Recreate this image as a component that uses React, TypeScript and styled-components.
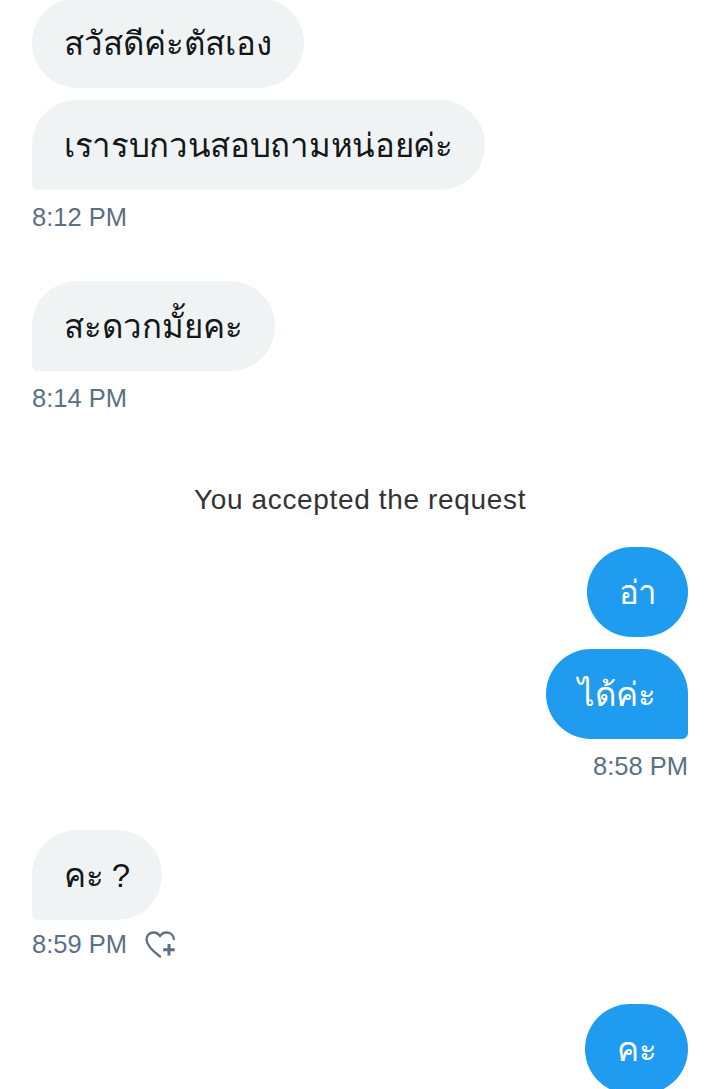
import React from 'react'
import styled, { createGlobalStyle } from 'styled-components'

const GlobalStyle = createGlobalStyle`
  html, body {
    margin: 0;
    padding: 0;
    background: #fff;
    overflow: hidden;
  }
`

const Page = styled.div`
  width: 720px;
  height: 1089px;
  overflow: hidden;
  box-sizing: border-box;
  padding: 0 32px;
  font-family: "Liberation Sans", Arial, sans-serif;
`

// pulls the first bubble up so it is cut off by the top of the screen
const Thread = styled.div`
  display: flex;
  flex-direction: column;
  flex-shrink: 0;
  transform: translateY(-2px);
`

const Row = styled.div<{ $mine?: boolean; $gap?: number }>`
  display: flex;
  flex-shrink: 0;
  justify-content: ${p => (p.$mine ? 'flex-end' : 'flex-start')};
  margin-top: ${p => p.$gap ?? 0}px;
`

const Bubble = styled.div<{ $mine?: boolean; $tail?: boolean; $spacing?: number }>`
  height: 90px;
  box-sizing: border-box;
  padding: 0 32px;
  display: flex;
  align-items: center;
  font-size: 33px;
  white-space: nowrap;
  letter-spacing: ${p => p.$spacing ?? 0}px;
  font-family: "Liberation Sans", "Noto Sans", sans-serif;
  border-radius: 45px;
  background: ${p => (p.$mine ? '#1f9bf0' : '#eff3f4')};
  color: ${p => (p.$mine ? '#fff' : '#14171a')};
  ${p => p.$tail && (p.$mine ? 'border-bottom-right-radius: 6px;' : 'border-bottom-left-radius: 6px;')}
`

const Meta = styled.div<{ $mine?: boolean; $top?: number }>`
  display: flex;
  flex-shrink: 0;
  align-items: center;
  justify-content: ${p => (p.$mine ? 'flex-end' : 'flex-start')};
  gap: 18px;
  margin-top: ${p => p.$top ?? 12}px;
  height: 30px;
  font-size: 25.5px;
  color: #5b7083;
`

const Notice = styled.div`
  margin-top: 70px;
  flex-shrink: 0;
  text-align: center;
  font-size: 28px;
  letter-spacing: 0.65px;
  line-height: 34px;
  color: #333;
`

export default function App() {
  return (
    <Page>
      <GlobalStyle />
      <Thread>
        <Row><Bubble>สวัสดีค่ะตัสเอง</Bubble></Row>
        <Row $gap={12}><Bubble $tail $spacing={-0.32}>เรารบกวนสอบถามหน่อยค่ะ</Bubble></Row>
        <Meta>8:12 PM</Meta>
        <Row $gap={49}><Bubble $tail>สะดวกมั้ยคะ</Bubble></Row>
        <Meta>8:14 PM</Meta>
        <Notice>You accepted the request</Notice>
        <Row $mine $gap={30}><Bubble $mine $spacing={-1}>อ่า</Bubble></Row>
        <Row $mine $gap={12}><Bubble $mine $tail>ได้ค่ะ</Bubble></Row>
        <Meta $mine>8:58 PM</Meta>
        <Row $gap={49}><Bubble $tail $spacing={-0.5}>คะ ?</Bubble></Row>
        <Meta $top={9}>
          8:59 PM
          <svg width="31" height="27" viewBox="0 0 31 27" fill="none" stroke="#5b7083" strokeWidth="2.3" strokeLinecap="round" strokeLinejoin="round">
            <path d="M15 25.500C9 21 1.500 15 1.500 8.500 1.500 4.500 4.500 1.500 8.500 1.500c2.800 0 5.200 1.500 6.500 3.800 1.300-2.300 3.700-3.800 6.500-3.800 4 0 7 2.800 7.300 6.500" />
            <path d="M24 13v11.500M18.200 18.800h11.500" strokeWidth="3" strokeLinecap="butt" />
          </svg>
        </Meta>
        <Row $mine $gap={45}><Bubble $mine $spacing={-0.5}>คะ</Bubble></Row>
      </Thread>
    </Page>
  )
}
